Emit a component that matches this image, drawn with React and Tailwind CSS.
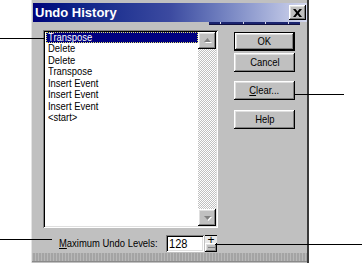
import React from 'react';

const items = ['Transpose', 'Delete', 'Delete', 'Transpose', 'Insert Event', 'Insert Event', 'Insert Event', '<start>'];

const raised = 'shadow-[inset_-1px_-1px_#000,inset_1px_1px_#fff,inset_-2px_-2px_#808080,inset_2px_2px_#dfdfdf]';
const sunken = 'shadow-[inset_1px_1px_#808080,inset_-1px_-1px_#fff,inset_2px_2px_#000,inset_-2px_-2px_#dfdfdf]';

function WinButton({ children, isDefault }) {
  return (
    <div className={`h-[19px] w-[61px] ${isDefault ? 'border border-black' : ''} bg-[#c0c0c0]`}>
      <div className={`h-full w-full ${raised} flex items-center justify-center text-[11.5px] leading-none text-black`}>
        <span className="inline-block whitespace-nowrap scale-x-[0.82]">{children}</span>
      </div>
    </div>
  );
}

function Arrow({ down }) {
  return (
    <svg width="9" height="6" viewBox="0 0 9 6">
      {down ? (
        <>
          <polygon points="2,2 9,2 5.5,6" fill="#fff" />
          <polygon points="1,1 8,1 4.5,5" fill="#808080" />
        </>
      ) : (
        <>
          <polygon points="5.5,1 9,5 2,5" fill="#fff" />
          <polygon points="4.5,0 8,4 1,4" fill="#808080" />
        </>
      )}
    </svg>
  );
}

export default function App() {
  return (
    <div className="relative w-[362px] h-[264px] bg-white overflow-hidden font-['Liberation_Sans',Arial,sans-serif]">
      {/* dialog */}
      <div className="ml-[31px] w-[278px] h-[263px] bg-[#c0c0c0] border-l border-l-[#e4e4e4] border-r-2 border-r-[#3a3a3a] flex flex-col">
        {/* title bar */}
        <div className="mt-[3px] ml-[1px] h-[19px] bg-gradient-to-r from-[#00007b] via-[#3c4aa0] to-[#d4d8ee] flex items-center justify-between pl-[2px] pr-px">
          <span className="font-bold text-[13px] leading-none text-white">Undo History</span>
          <div className={`w-[17px] h-[15px] bg-[#c0c0c0] ${raised} flex items-center justify-center`}>
            <svg width="9" height="8" viewBox="0 0 9 8">
              <path d="M0 0h2.5l2 2.6L6.5 0H9L5.8 4 9 8H6.5l-2-2.6-2 2.6H0l3.2-4z" fill="#000" />
            </svg>
          </div>
        </div>
        {/* strip under title */}
        <div className="h-[3px] flex">
          <div className="ml-[177px] w-[91px] h-full bg-[#1a2470] flex justify-around border-b border-b-[#101040]">
            <div className="w-px h-full bg-[#d8d8e8]" />
            <div className="w-px h-full bg-[#d8d8e8]" />
            <div className="w-px h-full bg-[#d8d8e8]" />
            <div className="w-px h-full bg-[#d8d8e8]" />
          </div>
        </div>

        {/* main */}
        <div className="flex mt-[5px]">
          <div className={`ml-[11px] w-[175px] h-[198px] bg-white ${sunken} p-[2px] flex`}>
            <div className="flex-1 pl-px">
              {items.map((it, i) => (
                <div
                  key={i}
                  className={`h-[11.45px] flex items-center pl-[2px] text-[11.5px] leading-none ${
                    i === 0 ? 'bg-[#000080] text-white outline-1 outline-dotted outline-[#e0e070] -outline-offset-1' : 'text-black'
                  }`}
                >
                  <span className="inline-block whitespace-nowrap origin-left scale-x-[0.82]">{it}</span>
                </div>
              ))}
            </div>
            <div className="w-[18px] h-full flex flex-col bg-[repeating-conic-gradient(#c0c0c0_0_25%,#fff_0_50%)] bg-size-[2px_2px]">
              <div className={`h-[17px] bg-[#c0c0c0] ${raised} flex items-center justify-center`}>
                <Arrow />
              </div>
              <div className="flex-1" />
              <div className={`h-[17px] bg-[#c0c0c0] ${raised} flex items-center justify-center`}>
                <Arrow down />
              </div>
            </div>
          </div>

          <div className="ml-[16px] flex flex-col mt-[2px]">
            <WinButton isDefault>OK</WinButton>
            <div className="mt-[2px]">
              <WinButton>Cancel</WinButton>
            </div>
            <div className="mt-[9px]">
              <WinButton>
                <span className="underline">C</span>lear...
              </WinButton>
            </div>
            <div className="mt-[10px]">
              <WinButton>Help</WinButton>
            </div>
          </div>
        </div>

        {/* bottom row */}
        <div className="flex items-center mt-[7px] h-[17px]">
          <div className="ml-[27px] w-[98px] whitespace-nowrap text-[11.5px] leading-none text-black">
            <span className="inline-block origin-left scale-x-[0.82]">
              <span className="underline">M</span>aximum Undo Levels:
            </span>
          </div>
          <div className={`ml-[9px] w-[38px] h-[17px] bg-white ${sunken} flex items-center pl-[3px] text-[13px] leading-none text-black`}>
            <span className="inline-block origin-left scale-x-[0.85]">128</span>
          </div>
          <div className="w-[12px] h-[17px] flex flex-col ml-px">
            <div className="h-[8px] bg-[#e8e8e8] border-t border-t-black flex items-center justify-center text-[12px] leading-none text-black">+</div>
            <div className={`h-[9px] bg-[#c0c0c0] ${raised} flex items-center justify-center`}>
              <div className="w-[7px] h-px bg-[#808080]" />
            </div>
          </div>
        </div>

        {/* band */}
        <div className="mt-[1px] h-[9px] bg-[#a9a9a9] bg-[repeating-linear-gradient(90deg,#b8b8b8_0_1px,#a4a4a4_1px_3px)] border-b border-b-[#8a8a8a]" />
      </div>

      {/* callout lines */}
      <div className="absolute left-0 top-[38px] w-[44px] h-px bg-black" />
      <div className="absolute left-[295px] top-[94px] w-[49px] h-px bg-black" />
      <div className="absolute left-0 top-[239px] w-[52px] h-px bg-black" />
      <div className="absolute left-[215px] top-[244px] w-[147px] h-px bg-black" />
    </div>
  );
}
